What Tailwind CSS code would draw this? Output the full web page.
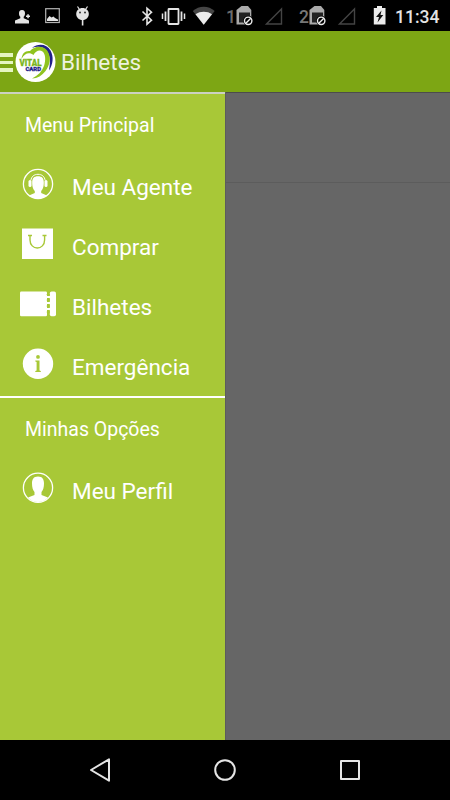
<!DOCTYPE html>
<html lang="pt">
<head>
    <meta charset="UTF-8">
    <meta name="viewport" content="width=device-width, initial-scale=1.0">
    <title>Bilhetes</title>
    <script src="https://cdn.jsdelivr.net/npm/@tailwindcss/browser@4"></script>
</head>
<body class="bg-black font-['Roboto',sans-serif] text-white">
    <div class="flex flex-col w-[450px] h-[800px] overflow-hidden">

        <!-- Status bar -->
        <div class="flex items-center h-[31px] shrink-0 bg-black text-[#e4e4e4]">
            <svg class="ml-[14px] shrink-0" width="18" height="31" viewBox="0 0 18 31" fill="currentColor">
                <path d="M8 10c2.300 0 3 1.500 3 3.500 0 1.500-.6 2.500-1.300 3.300v1.400L15 20.500V23.500H1v-3l5.300-2.300v-1.400C5.500 16 5 15 5 13.500 5 11.500 5.700 10 8 10z"/>
                <path d="M12 15.500h4v1.500h-4zM13.300 14.200h1.500v4h-1.500z"/>
            </svg>
            <svg class="ml-[13px] shrink-0" width="15" height="31" viewBox="0 0 15 31" fill="none">
                <rect x=".7" y="8.700" width="13.600" height="13.800" stroke="#b4b4b4" stroke-width="1.200"/>
                <path d="M2 21v-2l2.500-3 2 1.500 2-1 1.500 1.500 3 1.500V21z" fill="currentColor"/>
            </svg>
            <svg class="ml-[15px] shrink-0" width="16" height="31" viewBox="0 0 16 31" fill="currentColor">
                <path d="M2.500 6.500l2 3M12.500 6.500l-2 3" stroke="currentColor" stroke-width="1.200"/>
                <path d="M7.500 8C11 8 13.800 10.500 13.800 14c0 3.300-2.500 6-6.300 6s-6.300-2.700-6.300-6C1.200 10.500 4 8 7.500 8z"/>
                <path d="M6.800 20h1.600v5.500H6.800z"/>
                <circle cx="5" cy="12.500" r="1" fill="#333"/>
                <circle cx="10" cy="12.500" r="1" fill="#333"/>
            </svg>
            <svg class="ml-[50px] shrink-0" width="13" height="31" viewBox="0 0 13 31" fill="none" stroke="currentColor" stroke-width="1.600">
                <path d="M1.500 11.500l9 8.700-4.500 4V8.200l4.500 4L1.500 20.500"/>
            </svg>
            <svg class="ml-[7px] shrink-0" width="25" height="31" viewBox="0 0 25 31" fill="none" stroke="currentColor">
                <rect x="7.500" y="9" width="10" height="15" rx=".5" stroke-width="1.800"/>
                <path d="M4.500 11.500v9.500M20.500 11.500v9.500" stroke-width="1.800"/>
                <path d="M1.500 13.500v5.500M23.500 13.500v5.500" stroke-width="1.500"/>
            </svg>
            <svg class="ml-[6px] shrink-0" width="24" height="31" viewBox="0 0 24 31">
                <path d="M.8 11C7 5.300 16.500 5.300 22.700 11l-11 13.700z" fill="#454545"/>
                <path d="M3.500 14.300C8 11 15.500 11 20 14.300l-8.300 10.400z" fill="#ececec"/>
            </svg>
            <span class="ml-[10px] w-[9px] text-[17.500px] font-medium leading-[28px] pt-[3px] text-[#6c6c6c]">1</span>
            <svg class="ml-[1px] shrink-0" width="20" height="31" viewBox="0 0 20 31" fill="none">
                <path d="M5.500 6H12l3.300 4v14.500H.5V10z" fill="#aaa"/>
                <path d="M3 12.500h11v10H3z" fill="#222"/>
                <circle cx="12.200" cy="20.800" r="5" fill="#000"/>
                <circle cx="12.200" cy="20.800" r="3.700" stroke="#ececec" stroke-width="1.400"/>
                <path d="M9.800 23.300l5-5" stroke="#ececec" stroke-width="1.400"/>
            </svg>
            <svg class="ml-[8px] shrink-0" width="20" height="31" viewBox="0 0 20 31" fill="none">
                <path d="M2.500 24L17.500 9v15z" stroke="#444" stroke-width="1.400"/>
            </svg>
            <span class="ml-[15px] w-[9px] text-[17.500px] font-medium leading-[28px] pt-[3px] text-[#777]">2</span>
            <svg class="ml-[1px] shrink-0" width="20" height="31" viewBox="0 0 20 31" fill="none">
                <path d="M5.500 6H12l3.300 4v14.500H.5V10z" fill="#aaa"/>
                <path d="M3 12.500h11v10H3z" fill="#222"/>
                <circle cx="12.200" cy="20.800" r="5" fill="#000"/>
                <circle cx="12.200" cy="20.800" r="3.700" stroke="#ececec" stroke-width="1.400"/>
                <path d="M9.800 23.300l5-5" stroke="#ececec" stroke-width="1.400"/>
            </svg>
            <svg class="ml-[8px] shrink-0" width="20" height="31" viewBox="0 0 20 31" fill="none">
                <path d="M2.500 24L17.500 9v15z" stroke="#444" stroke-width="1.400"/>
            </svg>
            <svg class="ml-[16px] shrink-0" width="14" height="31" viewBox="0 0 14 31">
                <path d="M4 6h5v2h3.500v16.500H.8V8H4z" fill="#ececec"/>
                <path d="M8.500 10.500L3 17h3l-1.500 5.500L10.300 15H7.500z" fill="#111"/>
            </svg>
            <span class="ml-[8px] text-[17.500px] font-medium leading-[28px] pt-[3px]">11:34</span>
        </div>

        <!-- Action bar -->
        <div class="flex items-center h-[61px] shrink-0 bg-[#7da614]">
            <div class="flex flex-col gap-[4px] w-[13px] pt-[1px]">
                <div class="h-[4px] bg-[#e5f5c0]"></div>
                <div class="h-[3px] bg-[#e5f5c0]"></div>
                <div class="h-[4px] bg-[#e5f5c0]"></div>
            </div>
            <svg class="ml-[2px] shrink-0" width="41" height="42" viewBox="0 0 41 42">
                <circle cx="20.500" cy="21" r="20" fill="#fff"/>
                <path d="M17 7C23 2 32 3 35.500 9.500c3.500 6.500 2.500 14-1.500 20 1-7 2-13-2-19C28 5 22 5 17 7z" fill="#20208a"/>
                <path d="M6.500 18C7 12.500 10 9.500 15 10 19 5 28 3.500 32.500 10c4 6.500 2.500 14-2 20C27 34.500 22.500 37.500 17 37.500 23 34.500 27 30.500 29 25c2-6 1.500-12-1.500-14.500-3-2-7-.5-9 3.500C14.500 10.500 9.500 12 6.500 18z" fill="#8fc31f"/>
                <text x="4.500" y="24.500" textLength="22" lengthAdjust="spacingAndGlyphs" font-family="Roboto" font-weight="900" font-size="8.500" fill="#7ab51d" stroke="#7ab51d" stroke-width=".3">VITAL</text>
                <text x="10.500" y="30" textLength="15.500" lengthAdjust="spacingAndGlyphs" font-family="Roboto" font-weight="900" font-size="6.200" fill="#20208a" stroke="#20208a" stroke-width=".3">CARD</text>
            </svg>
            <span class="ml-[5px] text-[22.500px] leading-[30px] text-[#eef2e0]">Bilhetes</span>
        </div>

        <div class="flex h-[648px] shrink-0">
            <!-- Drawer -->
            <div class="w-[225px] bg-[#a8c837]">
                <div class="h-[2px] bg-[#ccd1c2]"></div>
                <div class="flex items-center h-[61px] pl-[25px] pt-[2px] text-[19.500px]">Menu Principal</div>
                <div class="flex items-center h-[60px] text-[22.500px]">
                    <svg class="ml-[22px] mr-[18px] mb-[2px] shrink-0" width="32" height="32" viewBox="0 0 32 32" fill="#fff">
                        <circle cx="16" cy="16" r="14.600" fill="none" stroke="#fff" stroke-width="1.300"/>
                        <path d="M16 8.300c4 0 5.800 2 5.800 6 0 4.700-.8 6.700-2.600 8.700v2l5.800 2.500c-4.500 4-13.500 4-18 0l5.800-2.500v-2c-1.800-2-2.600-4-2.600-8.700 0-4 1.800-6 5.800-6z"/>
                        <path d="M8.800 12.500C9.500 8.500 12 6.300 16 6.300s6.500 2.200 7.200 6.200" fill="none" stroke="#fff" stroke-width="1"/>
                        <rect x="6.500" y="12" width="3" height="7" rx="1.500"/>
                        <rect x="22.500" y="12" width="3" height="7" rx="1.500"/>
                    </svg>
                    <span class="pt-[5px]">Meu Agente</span>
                </div>
                <div class="flex items-center h-[60px] text-[22.500px]">
                    <svg class="ml-[22px] mr-[18px] mb-[2px] shrink-0" width="32" height="32" viewBox="0 0 32 32">
                        <path d="M0 .5h31v30.500H0z" fill="#fff"/>
                        <path d="M6 7.500h4M20.500 7.500h4M8 7.500v4.500c0 5 3.500 8 7.300 8s7.300-3 7.300-8V7.500" fill="none" stroke="#a8c837" stroke-width="1.400"/>
                    </svg>
                    <span class="pt-[5px]">Comprar</span>
                </div>
                <div class="flex items-center h-[60px] text-[22.500px]">
                    <svg class="ml-[20px] mr-[16px] mb-[2px] shrink-0" width="36" height="26" viewBox="0 0 36 26" fill="#fff">
                        <rect x="0" y=".5" width="27" height="24.800" rx="1.200"/>
                        <rect x="29.800" y=".5" width="6.200" height="24.800" rx="1.800"/>
                        <path d="M26.500 5h3.500v2h-3.500zM26.500 11h3.500v2h-3.500zM26.500 17h3.500v2h-3.500z"/>
                        <circle cx="28.300" cy="9" r="1.600" fill="#a8c837"/>
                        <circle cx="28.300" cy="15" r="1.600" fill="#a8c837"/>
                        <circle cx="28.300" cy="21" r="1.600" fill="#a8c837"/>
                        <circle cx="28.300" cy="3.500" r="1.600" fill="#a8c837"/>
                    </svg>
                    <span class="pt-[5px]">Bilhetes</span>
                </div>
                <div class="flex items-center h-[60px] text-[22.500px]">
                    <svg class="ml-[22px] mr-[18px] mb-[2px] shrink-0" width="32" height="32" viewBox="0 0 32 32">
                        <circle cx="16" cy="15.800" r="15.200" fill="#fff"/>
                        <circle cx="16" cy="8.900" r="1.900" fill="#a8c837"/>
                        <path d="M13.300 12.500h4.200v10l1.300.5v1H13.300v-1l1.300-.5v-8.500l-1.300-.5z" fill="#a8c837"/>
                    </svg>
                    <span class="pt-[5px]">Emergência</span>
                </div>
                <div class="h-[2px] mt-[1px] bg-white"></div>
                <div class="flex items-center h-[61px] pl-[25px] pt-[2px] text-[19.500px]">Minhas Opções</div>
                <div class="flex items-center h-[60px] text-[22.500px]">
                    <svg class="ml-[22px] mr-[18px] mb-[2px] shrink-0" width="32" height="32" viewBox="0 0 32 32" fill="#fff">
                        <circle cx="16" cy="15.800" r="14.600" fill="none" stroke="#fff" stroke-width="1.300"/>
                        <path d="M16 4.500c4.500 0 6 2.800 6 7 0 4-1 7-2.500 8.500v3l6.500 2.500c-5 6-15 6-20 0l6.500-2.500v-3C11 18.500 10 15.500 10 11.500 10 7.300 11.500 4.500 16 4.500z"/>
                    </svg>
                    <span class="pt-[5px]">Meu Perfil</span>
                </div>
            </div>

            <!-- Dimmed content -->
            <div class="w-[225px] bg-[#666] border-l border-[#5c5c5c]">
                <div class="h-[91px] border-t border-b border-t-[#4c4c4c] border-b-[#5c5c5c]"></div>
            </div>
        </div>

        <!-- Navigation bar -->
        <div class="flex items-center h-[60px] shrink-0 bg-black">
            <svg class="ml-[87px] shrink-0" width="26" height="26" viewBox="0 0 26 26" fill="none" stroke="#e4e4e4" stroke-width="2" stroke-linejoin="round">
                <path d="M4 13l18-10.700v21.400z"/>
            </svg>
            <svg class="ml-[99px] shrink-0" width="26" height="26" viewBox="0 0 26 26" fill="none" stroke="#e4e4e4" stroke-width="2">
                <circle cx="13" cy="13" r="9.800"/>
            </svg>
            <svg class="ml-[99px] shrink-0" width="26" height="26" viewBox="0 0 26 26" fill="none" stroke="#e4e4e4" stroke-width="2" stroke-linejoin="round">
                <rect x="4" y="4" width="18" height="18"/>
            </svg>
        </div>
    </div>
</body>
</html>
